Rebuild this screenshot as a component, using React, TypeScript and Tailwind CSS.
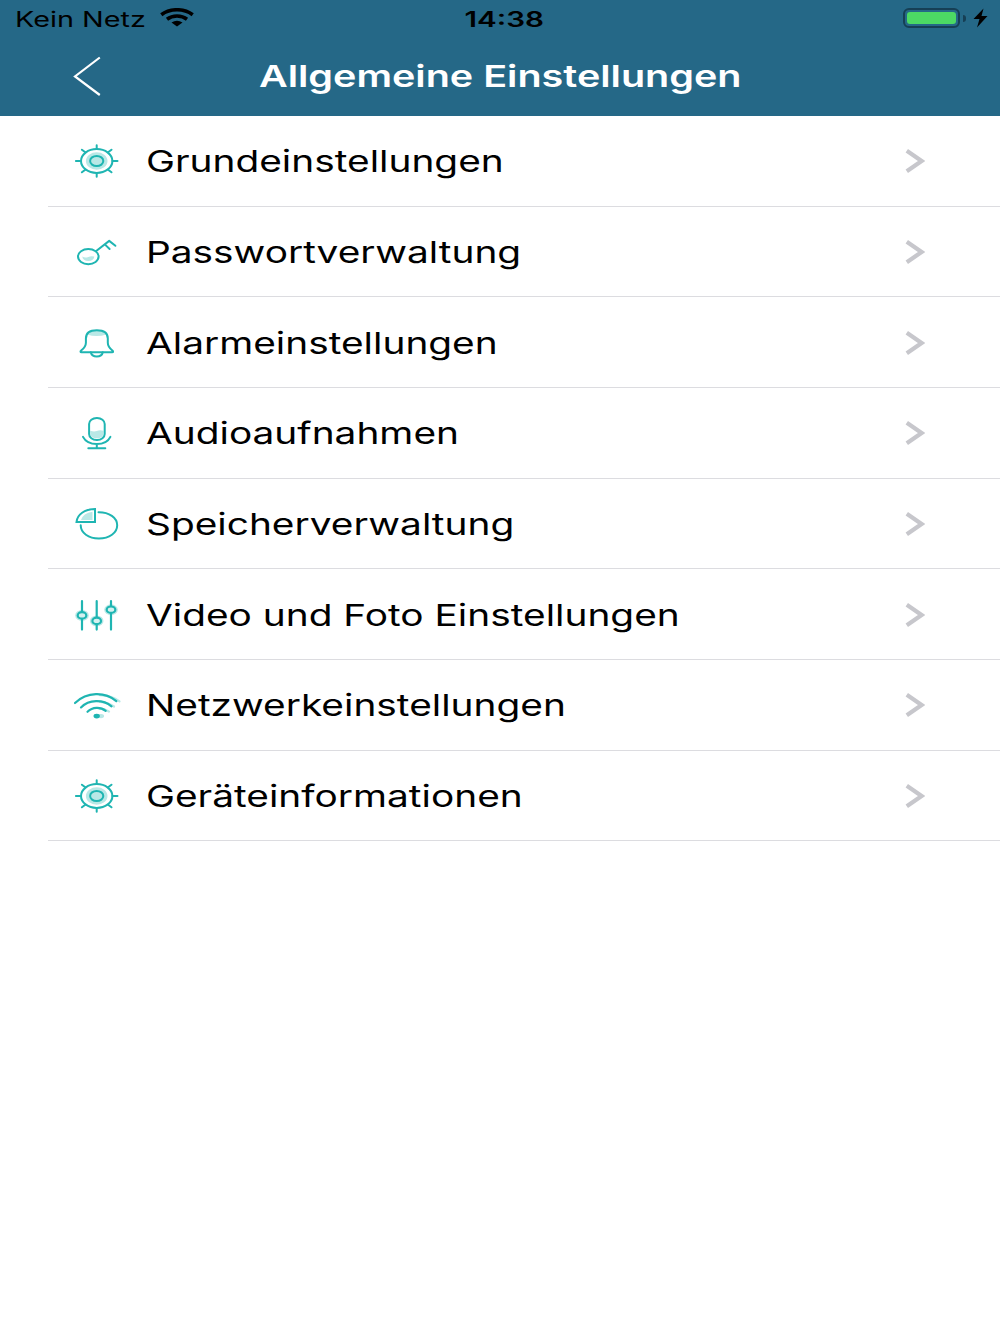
import type { ReactNode } from "react";

const TEAL = "#1fb5b2";
const TINT = "#b9e8e6";

const Icon = ({ children }: { children: ReactNode }) => (
    <svg
        className="mt-px shrink-0"
        width="48"
        height="40"
        viewBox="0 0 48 40"
        fill="none"
        stroke={TEAL}
        strokeWidth="2"
        strokeLinecap="round"
        strokeLinejoin="round"
    >
        {children}
    </svg>
);

const GearIcon = () => (
    <Icon>
        <ellipse cx="23.7" cy="20" rx="15.7" ry="11.9" />
        <ellipse cx="23.7" cy="20" rx="9" ry="7" stroke={TINT} strokeWidth="3.6" />
        <ellipse cx="23.7" cy="20" rx="6.6" ry="5.1" fill={TINT} />
        <path d="M2.9 20H8M39.4 20h5.1M23.7 4.3v3.8M23.7 31.9v3.8M8.9 8.7l3.4 2.6M38.5 8.7l-3.4 2.6M8.9 31.3l3.4-2.6M38.5 31.3l-3.4-2.6" />
    </Icon>
);

const KeyIcon = () => (
    <Icon>
        <path d="M9.3 24.6q3 1.6 6 .3t6-.3q-.5 4.4-6 4.4t-6-4.4z" fill={TINT} stroke="none" />
        <ellipse cx="15.3" cy="24.6" rx="10.3" ry="7.6" />
        <path d="M23.2 19L36.2 8.9L42.4 13.8M31.8 12.4L36.6 17" />
    </Icon>
);

const BellIcon = () => (
    <Icon>
        <path d="M14 11.5q2.5-4 9.7-4t9.7 4q-9.7 3-19.4 0z" fill={TINT} stroke="none" />
        <path d="M12.9 15.5C12.9 9.8 17 7.3 23.8 7.3s11 2.5 11 8.2v4.2c0 4 2.2 5.8 4.6 7.8c1.1.9.9 1.7-.3 1.7H8.5c-1.2 0-1.4-.8-.3-1.7c2.4-2 4.7-3.8 4.7-7.8z" />
        <path d="M17.8 29.3c.6 3 2.6 4.3 6 4.3s5.4-1.3 6-4.3" />
    </Icon>
);

const MicIcon = () => (
    <Icon>
        <path d="M17.3 17.7q3.5 1.4 6.5.3t6.6-.3v2.3q0 5.3-6.5 5.3t-6.6-5.3z" fill={TINT} stroke="none" />
        <rect x="16.1" y="5" width="15.6" height="22" rx="7.6" ry="6" />
        <path d="M10 23.9c2.6 5 7.5 7.2 13.8 7.2s11.2-2.2 13.6-7.2M23.8 31.1v4M15.3 35.2h17" />
    </Icon>
);

const PieIcon = () => (
    <Icon>
        <path d="M19.5 7.7v8.2H8q2-6.6 11.5-8.2z" fill={TINT} stroke="none" />
        <path d="M22 5.1V18H3.5C4.3 10.3 11.5 5.4 22 5.1z" strokeLinejoin="miter" />
        <path d="M25.5 8.2C36.2 8.1 44.2 13.6 44.2 21.3S36.3 34.5 25.9 34.5S7.7 28.9 7.7 21.3" />
    </Icon>
);

const SlidersIcon = () => (
    <Icon>
        <g fill={TINT} stroke="none">
            <ellipse cx="9" cy="20.4" rx="6.8" ry="5.4" />
            <ellipse cx="23.7" cy="25.9" rx="6.8" ry="5.4" />
            <ellipse cx="38" cy="14.7" rx="6.8" ry="5.4" />
        </g>
        <path d="M9 6.2v28.4M23.7 6.2v28.4M38 6.2v28.4" strokeWidth="2.2" />
        <g fill="#d5f1f0" strokeWidth="2.2">
            <ellipse cx="9" cy="20.4" rx="4.3" ry="3.2" />
            <ellipse cx="23.7" cy="25.9" rx="4.3" ry="3.2" />
            <ellipse cx="38" cy="14.7" rx="4.3" ry="3.2" />
        </g>
    </Icon>
);

const WifiIcon = () => (
    <Icon>
        <g stroke={TINT} strokeWidth="2.2">
            <path d="M27 10.2q11.5.3 19.5 6.2M27 17q8 .3 14 4.5M27 23.6q5.500.3 9 3" />
            <ellipse cx="28" cy="31.1" rx="2" ry="1" fill={TINT} />
        </g>
        <path
            d="M2 18C14 6.6 32 6.5 43.3 16.2M8 22.4C16 14.3 30 14.2 38.5 21.3M14.5 26.8C19.5 21.9 27.5 21.6 32.7 25.9"
            strokeWidth="2.2"
        />
        <ellipse cx="23.7" cy="31.1" rx="2.2" ry="1.4" fill={TEAL} />
    </Icon>
);

const items = [
    { label: "Grundeinstellungen", icon: <GearIcon /> },
    { label: "Passwortverwaltung", icon: <KeyIcon /> },
    { label: "Alarmeinstellungen", icon: <BellIcon /> },
    { label: "Audioaufnahmen", icon: <MicIcon /> },
    { label: "Speicherverwaltung", icon: <PieIcon /> },
    { label: "Video und Foto Einstellungen", icon: <SlidersIcon /> },
    { label: "Netzwerkeinstellungen", icon: <WifiIcon /> },
    { label: "Geräteinformationen", icon: <GearIcon /> },
];

const StatusBar = () => (
    <div className="grid h-9 grid-cols-3 items-center text-black">
        <div className="flex items-center pl-[15px]">
            <span className="mt-0.5 w-[145px] origin-left scale-x-[1.37] text-[21px] leading-none whitespace-nowrap">
                Kein Netz
            </span>
            <svg width="34" height="20" viewBox="0 0 34 20" fill="none" stroke="black" strokeWidth="3.6">
                <path d="M1.3 6.7C10 .1 24 .1 32.7 6.7M7 11.2C12.5 7 21.5 7 27 11.2" />
                <path d="M11.5 14.5q5.5-3.4 11 0L17 18.5z" fill="black" stroke="none" />
            </svg>
        </div>
        <div className="flex justify-center pt-0.5 pl-[9px]">
            <span className="scale-x-[1.41] text-[21px] leading-none font-semibold">14:38</span>
        </div>
        <div className="flex items-center justify-end pr-[12px]">
            <div className="h-5 w-[57px] rounded-[6px] border-2 border-[#163f55] p-[2px]">
                <div className="h-full w-full rounded-[3px] bg-[#4cd964]" />
            </div>
            <div className="ml-[3px] h-[7px] w-[3px] rounded-r-full bg-[#163f55]" />
            <svg className="ml-[7px]" width="15" height="20" viewBox="0 0 15 20">
                <path d="M10.5.5L.5 11h6L4 19.500L14.500 8H8.500z" />
            </svg>
        </div>
    </div>
);

const App = () => {
    return (
        <div className="h-[1334px] w-[1000px] overflow-hidden bg-white font-['Inter',sans-serif]">
            <header className="h-[116px] bg-[#256887]">
                <StatusBar />
                <div className="flex h-20 items-center pl-[73px]">
                    <svg width="28" height="40" viewBox="0 0 28 40" fill="none" stroke="white" strokeWidth="2.2">
                        <path d="M26.8 1.5L2 20.5L26.8 39" />
                    </svg>
                    <h1 className="mr-[100px] flex-1 text-center text-[30px] leading-none font-semibold whitespace-nowrap text-white">
                        <span className="inline-block scale-x-[1.317]">Allgemeine Einstellungen</span>
                    </h1>
                </div>
            </header>
            <ul className="pl-12">
                {items.map(item => (
                    <li
                        key={item.label}
                        className="flex h-[90.66px] items-center border-b border-[#dcdce0] pr-[75px] pl-[25px]"
                    >
                        {item.icon}
                        <span className="mt-px ml-[24.5px] flex-1 origin-left scale-x-[1.294] text-[30px] leading-none whitespace-nowrap text-black">
                            {item.label}
                        </span>
                        <svg
                            className="mt-px"
                            width="20"
                            height="24"
                            viewBox="0 0 20 24"
                            fill="none"
                            stroke="#c7c7cc"
                            strokeWidth="4.2"
                        >
                            <path d="M1.8 1.8L16.6 12L1.800 22.200" />
                        </svg>
                    </li>
                ))}
            </ul>
        </div>
    );
};

export default App;
